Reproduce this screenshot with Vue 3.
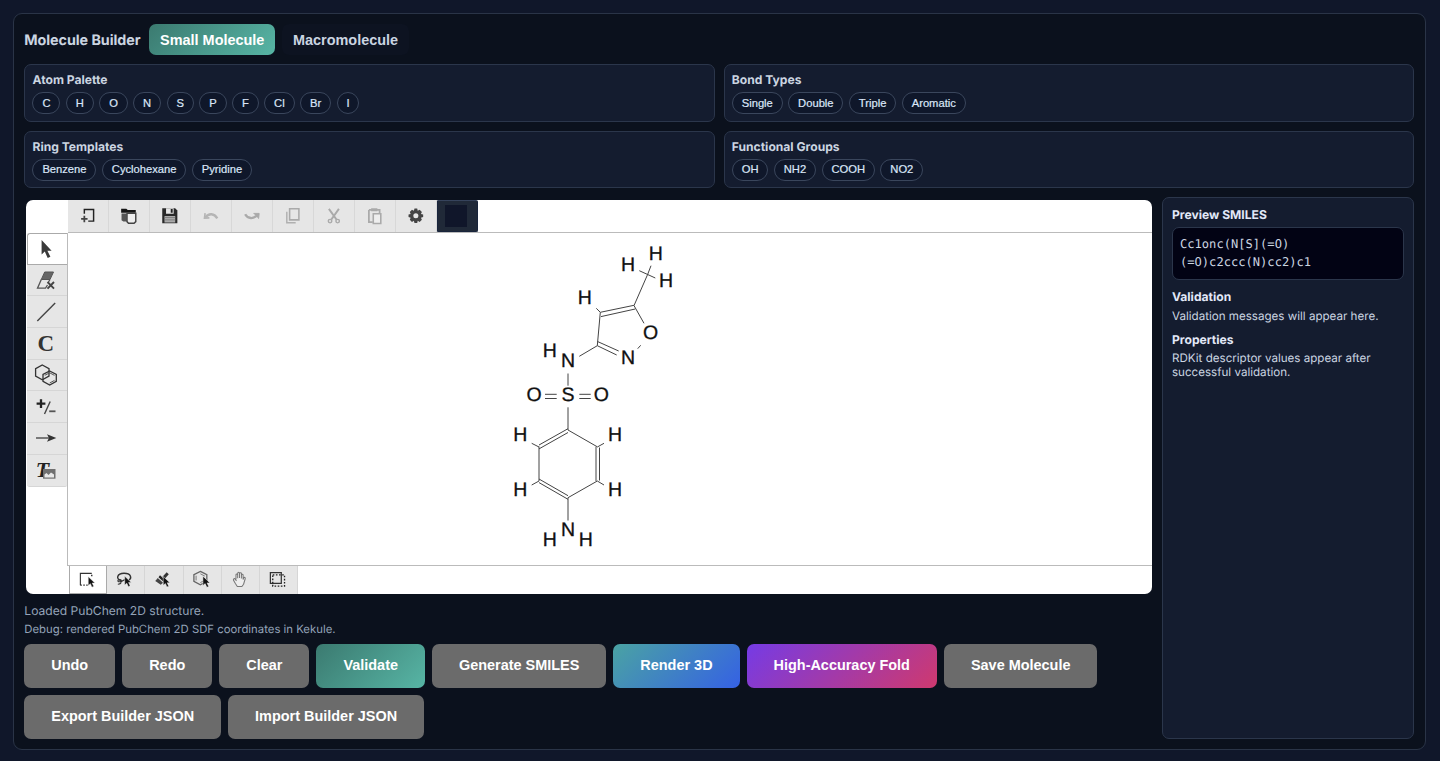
<script setup>
const palettes = [
  { title: 'Atom Palette', items: ['C', 'H', 'O', 'N', 'S', 'P', 'F', 'Cl', 'Br', 'I'] },
  { title: 'Bond Types', items: ['Single', 'Double', 'Triple', 'Aromatic'] },
  { title: 'Ring Templates', items: ['Benzene', 'Cyclohexane', 'Pyridine'] },
  { title: 'Functional Groups', items: ['OH', 'NH2', 'COOH', 'NO2'] },
]

const cursor = '<path d="M0 0V11L2.6 8.7L4.6 13L6.8 12L4.8 7.9H8.2Z" fill="#111" stroke="#eee" stroke-width=".6"/>'

const topTools = [
  { name: 'new', art: '<path d="M6.5 8V3.5H16V15.5H10.5" fill="none" stroke="#222" stroke-width="1.5"/><path d="M6.5 10V16.6M3.2 13.3H9.8" stroke="#444" stroke-width="1.8"/>' },
  { name: 'open', art: '<path d="M2.2 2.8H7.5L9 4H17.2V7H2.2Z" fill="#151515"/><path d="M2.6 7.8H8V16H4.5L2.6 14.5Z" fill="#555"/><path d="M8.2 7.5H17.2V16L15.5 17.6H9.7L8.2 16Z" fill="#eee" stroke="#444" stroke-width="1.5"/>' },
  { name: 'save', art: '<path d="M2.3 2.2H15.5L17.8 4.5V17.8H2.3Z" fill="#292929"/><path d="M6.2 2.2H14V8H6.2Z" fill="#e6e6e6"/><path d="M11 3H13V7H11Z" fill="#222"/><path d="M4.6 10.3H15.6V17H4.6Z" fill="#aaa"/><path d="M4.6 11.8H15.6M4.6 14.2H15.6" stroke="#777" stroke-width=".8"/>' },
  { name: 'undo', art: '<path d="M4.2 7.4L3.6 12.4L8.6 12.2" fill="none" stroke="#b5b5b5" stroke-width="1.7"/><path d="M4.5 11.7C8 7 13.5 7.4 16.7 12.6" fill="none" stroke="#b5b5b5" stroke-width="2.4"/>' },
  { name: 'redo', art: '<path d="M11.8 7.6H17.6L17 13" fill="#aaa" stroke="#aaa" stroke-width="1"/><path d="M3.2 8.5C6 13.5 12 13.5 15.8 9.3" fill="none" stroke="#aaa" stroke-width="2.4"/>' },
  { name: 'copy', art: '<path d="M6.8 2.8H16.3V14.2H6.8Z" fill="none" stroke="#aaa" stroke-width="1.6"/><path d="M3.9 6V17.2H13" fill="none" stroke="#b0b0b0" stroke-width="1.5"/>' },
  { name: 'cut', art: '<path d="M5 3L12.8 13.8M15.3 3L7.5 13.8" stroke="#aaa" stroke-width="2"/><circle cx="6.2" cy="15.5" r="1.8" fill="none" stroke="#aaa" stroke-width="1.5"/><circle cx="14" cy="15.5" r="1.8" fill="none" stroke="#aaa" stroke-width="1.5"/>' },
  { name: 'paste', art: '<path d="M4 4H15V9M4 4V16.5H8" fill="none" stroke="#aaa" stroke-width="1.8"/><path d="M6.3 2.2H12.7V5.3H6.3Z" fill="#aaa"/><path d="M8.5 8H16.2V18H8.5Z" fill="#eee" stroke="#aaa" stroke-width="1.6"/>' },
  { name: 'settings', art: '<path d="M8.7 2.6H11.5L12 4.8L14 3.9L16.3 6.1L15.3 8.2L17.6 8.7V11.4L15.3 12L16.3 14.1L14 16.3L12 15.2L11.5 17.5H8.7L8.1 15.2L6.1 16.3L3.9 14.1L4.8 12L2.6 11.4V8.7L4.8 8.2L3.9 6.1L6.1 3.9L8.1 4.8Z" fill="#444"/><circle cx="10.1" cy="10" r="2.6" fill="#e6e6e6"/>' },
]

const sideTools = [
  { name: 'select', art: '<path d="M4.6 1V15.6L7.8 12.6L10.7 19L13.4 17.8L10.4 11.7H14.6Z" fill="#3a3a3a"/>' },
  { name: 'erase', art: '<path d="M8.7 2H17.5L14 9.5H5.3Z" fill="#666" stroke="#555"/><path d="M5.3 9.5L1.5 18.2H9.5L11.5 15M12.5 12L14 9.5" fill="none" stroke="#555" stroke-width="1.3"/><path d="M11.5 12L18 18.6M18 12L11.5 18.6" stroke="#444" stroke-width="1.9"/>' },
  { name: 'bond', art: '<path d="M1.3 19L19.2 1" stroke="#444" stroke-width="1.4"/>' },
  { name: 'atom', art: '<text x="1.6" y="17.5" font-family="Liberation Serif, serif" font-weight="bold" font-size="23" fill="#333">C</text>' },
  { name: 'ring', art: '<path d="M6.3 0L13 3.7V11L6.3 14.7L-.4 11V3.7Z" fill="none" stroke="#333" stroke-width="1.3"/><path d="M13.7 6L20.3 9.5V16.3L13.7 20L7 16.3V9.5Z" fill="none" stroke="#333" stroke-width="1.3"/><path d="M8.8 10.3L13.7 7.8L18.5 10.4M18.5 15.4L13.7 18" fill="none" stroke="#555"/>' },
  { name: 'charge', art: '<path d="M5 2.2V11M.6 6.6H9.4" stroke="#222" stroke-width="2.3"/><path d="M8.5 17L14.2 4.5" stroke="#444" stroke-width="1.4"/><path d="M13.2 14.3H19.5" stroke="#555" stroke-width="1.8"/>' },
  { name: 'arrow', art: '<path d="M0 10H15" stroke="#555" stroke-width="1.5"/><path d="M11 6.2L20.3 10L11 13.8L13 10Z" fill="#333"/>' },
  { name: 'text', art: '<text x="-.3" y="17" font-family="Liberation Serif, serif" font-weight="bold" font-style="italic" font-size="22" fill="#222">T</text><path d="M7 9H19.5V18.7H7Z" fill="#707070"/><path d="M8.5 17.5V14.5L10.5 13L12.5 15L15 12.5L18 14.5V17.5Z" fill="#e8e8e8"/>' },
]

const bottomTools = [
  { name: 'marquee', art: '<path d="M2.5 16V3.5H14.5" fill="none" stroke="#333" stroke-width="1.2"/><path d="M14.5 5V8M2.5 16H11" stroke="#222" stroke-width="1.4" stroke-dasharray="1.5 1.6"/><g transform="translate(10.8 7) scale(.85)">' + cursor + '</g>' },
  { name: 'lasso', art: '<path d="M6.5 11C.5 10 2 3.5 9.5 3.5C17.5 3.5 17.5 8.8 14.8 10.6" fill="none" stroke="#333" stroke-width="1.5"/><path d="M7 11C3 8.5 1.5 12.5 5 12.4C9 12.2 8.5 9.5 11 10.5M6.5 12.2C6.5 14 5 15 3 15" fill="none" stroke="#333" stroke-width="1.2"/><g transform="translate(10.2 6.5) scale(.85)">' + cursor + '</g>' },
  { name: 'brush', art: '<path d="M10 7.2L14.4 2.4L16.6 4.4L12.2 9.6Z" fill="#333"/><path d="M7.4 5.6L13 10.8L11.4 12.6L5.8 7.6Z" fill="#222"/><path d="M5 8.5L10.6 13.4L8.2 15.6L2.4 11.6Z" fill="#444"/><g transform="translate(10.8 6.8) scale(.85)">' + cursor + '</g>' },
  { name: 'molecule', art: '<path d="M8.8 1.5L15.6 5V12L8.8 15.6L2 12V5Z" fill="none" stroke="#666" stroke-width="1.4"/><path d="M4.3 6V11M8.8 4L13.5 6.4M8.8 13.2L12 11.6" stroke="#777"/><g transform="translate(11.5 6.5) scale(.9)">' + cursor + '</g>' },
  { name: 'pan', art: '<path d="M6.3 10V5.2C6.3 3.8 8.1 3.8 8.1 5.2V8.7V3.5C8.1 2.1 10 2.1 10 3.5V8.5V3.8C10 2.5 12 2.5 12 3.8V9V5.5C12 4.2 13.8 4.2 13.8 5.5V10L14.3 8.4C15 7.2 16.5 7.8 16 9.2L14.3 15L12.5 17.4H7.7L5.5 14L3.6 10.6C3.3 9 4.9 8.6 5.6 9.8L6.8 11.6" fill="#eee" stroke="#777" stroke-width="1.1"/>' },
  { name: 'expand', art: '<path d="M2.5 2.7H14V14H2.5Z" fill="none" stroke="#333" stroke-width="1.3"/><path d="M5 5.2H17.4V17H5Z" fill="none" stroke="#222" stroke-width="1.4" stroke-dasharray="1.7 1.6"/>' },
]

const atoms = [
  ['H', 655.7, 260.4], ['H', 628, 271], ['H', 666, 286.8], ['H', 584.8, 303.5], ['H', 549.7, 357.2],
  ['N', 568, 366.6], ['N', 628, 364.3], ['O', 650.5, 339], ['S', 568, 401.2], ['O', 534, 401.2], ['O', 601.3, 401.2],
  ['H', 520.3, 440.7], ['H', 615, 440.7], ['H', 520.3, 495.5], ['H', 615, 495.5],
  ['N', 568, 536], ['H', 549.8, 545.8], ['H', 585.8, 545.8],
]

const bonds = [
  'M651 265.7L647.7 274.3L634 305.6L644 323.3', 'M639.3 270.7L655.3 278',
  'M634 305.3L600.3 312.3L597.3 345.7L579.3 356.3', 'M635.2 309L601 316.6', 'M596.3 308.3L600.3 312.3',
  'M597.5 341.5L618.7 351', 'M597.3 345.7L616.7 355', 'M640.7 345.3L637.7 348.7',
  'M568 373.5V385.7', 'M545 394.3H556.7M545 398.5H556.7M579.3 394.3H590.7M579.3 398.5H590.7',
  'M568 407.3V430L597.3 446.8', 'M568 428.7L539 445', 'M568 432.5L539 448.9',
  'M539 446.5V481', 'M539 479L568 495.7', 'M539 482.6L568 499.3',
  'M568 520.5V497.7L597.3 481', 'M596 446.7V481M599.5 447.5V480.5',
  'M531.7 443.3L539 447M604 443.3L597.3 447M531.7 485L539 481M604 485L597.3 481',
]

const actions = [
  { label: 'Undo' }, { label: 'Redo' }, { label: 'Clear' },
  { label: 'Validate', tone: 'teal' }, { label: 'Generate SMILES' },
  { label: 'Render 3D', tone: 'blue' }, { label: 'High-Accuracy Fold', tone: 'violet' },
  { label: 'Save Molecule' }, { label: 'Export Builder JSON' }, { label: 'Import Builder JSON' },
]
</script>

<template>
  <div class="page">
    <section class="builder">
      <header class="head">
        <h1>Molecule Builder</h1>
        <button class="tab teal">Small Molecule</button>
        <button class="tab idle">Macromolecule</button>
      </header>

      <div class="palettes">
        <div v-for="p in palettes" :key="p.title" class="card palette">
          <h2>{{ p.title }}</h2>
          <div class="pills">
            <button v-for="i in p.items" :key="i" class="pill">{{ i }}</button>
          </div>
        </div>
      </div>

      <div class="work">
        <div class="left">
          <div class="editor">
            <div class="corner"></div>
            <div class="top-bar">
              <button v-for="t in topTools" :key="t.name" class="tool" :aria-label="t.name">
                <svg viewBox="0 0 20 20" v-html="t.art"></svg>
              </button>
              <button class="tool swatch" aria-label="inspector"><span></span></button>
            </div>
            <div class="side-bar">
              <button v-for="(t, n) in sideTools" :key="t.name" class="tool" :class="{ on: n === 0 }" :aria-label="t.name">
                <svg viewBox="0 0 20 20" v-html="t.art"></svg>
              </button>
            </div>
            <div class="canvas">
              <svg viewBox="68 233 1084 332" width="1084" height="332">
                <path v-for="d in bonds" :key="d" :d="d" class="bond" />
                <text v-for="(a, n) in atoms" :key="n" :x="a[1]" :y="a[2]" class="atom">{{ a[0] }}</text>
              </svg>
            </div>
            <div class="bottom-bar">
              <button v-for="(t, n) in bottomTools" :key="t.name" class="tool" :class="{ on: n === 0 }" :aria-label="t.name">
                <svg viewBox="0 0 20 20" v-html="t.art"></svg>
              </button>
            </div>
          </div>
          <p class="status">Loaded PubChem 2D structure.</p>
          <p class="debug">Debug: rendered PubChem 2D SDF coordinates in Kekule.</p>
          <div class="actions">
            <button v-for="a in actions" :key="a.label" class="action" :class="a.tone">{{ a.label }}</button>
          </div>
        </div>

        <aside class="card preview">
          <h3>Preview SMILES</h3>
          <pre>Cc1onc(N[S](=O)
(=O)c2ccc(N)cc2)c1</pre>
          <h3>Validation</h3>
          <p>Validation messages will appear here.</p>
          <h3>Properties</h3>
          <p>RDKit descriptor values appear after successful validation.</p>
        </aside>
      </div>
    </section>
  </div>
</template>

<style>
body { background: #10172a; }
</style>

<style scoped>
* { box-sizing: border-box; }
.page {
  height: 761px;
  padding: 13px 14.5px 11px 13px;
  background: #10172a;
  font-family: Inter, "Liberation Sans", sans-serif;
  color: #cbd5e1;
  text-rendering: geometricPrecision;
}
.builder {
  height: 737px;
  padding: 10px 10.5px 10px 10.3px;
  border: 1px solid #2a3447;
  border-radius: 9px;
  background: #0b111d;
}
h1, h2, h3, p, pre { margin: 0; }
button { border: 0; padding: 0; font-family: "Liberation Sans", Arial, sans-serif; }
.head { display: flex; align-items: center; height: 31px; }
h1 { width: 125px; padding-top: 2px; font-size: 14.3px; font-weight: 650; letter-spacing: -.05px; color: #cbd5e1; white-space: nowrap; }
.tab {
  height: 31px;
  padding: 0 10.8px;
  border-radius: 7px;
  font-size: 14.45px;
  font-weight: 700;
  color: #fff;
}
.tab.idle { margin-left: 7px; background: #0d1321; color: #cbd5e1; }
.teal { background: linear-gradient(135deg, #3b7a70, #57b5a5); }

.palettes {
  display: grid;
  grid-template-columns: 1fr 1fr;
  gap: 9px;
  margin-top: 9px;
}
.card { border: 1px solid #2b364b; border-radius: 7px; background: #141c2f; }
.palette { height: 57.5px; padding: 7px 7.2px; }
h2 { height: 15px; font-size: 12.1px; line-height: 15px; font-weight: 650; }
.pills { display: flex; gap: 5.5px; margin-top: 5px; }
.pill {
  height: 22px;
  padding: 0 8.9px;
  border: 1px solid #3a465c;
  border-radius: 11px;
  background: #0f172a;
  color: #dbe6f8;
  font-size: 11.2px;
  line-height: 19px;
  -webkit-text-stroke: .2px;
}

.work {
  display: grid;
  grid-template-columns: 1fr 252px;
  gap: 9px;
  height: 541px;
  margin-top: 9px;
}
.left { padding-top: 3px; }
.editor {
  display: grid;
  grid-template-columns: 42px 1fr;
  grid-template-rows: 33px 333px 28px;
  width: 1126px;
  height: 394px;
  margin-left: 1.7px;
  overflow: hidden;
  border-radius: 7px;
  background: #fff;
}
.tool {
  display: flex;
  align-items: center;
  justify-content: center;
  flex: none;
  background: #e6e6e6;
}
.tool svg { display: block; width: 20px; height: 20px; overflow: visible; }
.top-bar { display: flex; border-bottom: 1px solid #bbb; }
.top-bar .tool { width: 41px; height: 32px; border-right: 1px solid #d8d8d8; }
.top-bar .tool svg { width: 19.5px; height: 19.5px; margin-right: 1px; }
.top-bar .swatch { border: 1px solid #18243c; border-top-color: #36435c; border-radius: 1px 2px 2px 1px; background: #202938; }
.swatch span { width: 22px; height: 22px; margin-right: 2px; background: #10162a; }
.side-bar { display: flex; flex-direction: column; padding-left: 1px; border-right: 1px solid #bbb; }
.side-bar .tool { height: 31.7px; border-bottom: 1px solid #d6d6d6; }
.side-bar .tool:last-child { border-radius: 0 0 2px 3px; }
.tool.on { background: #fff; }
.side-bar .on { border: 1px solid #aaa; border-right: 0; border-radius: 3px 0 0 0; }
.side-bar .tool svg { margin-right: 1.4px; }
.canvas { border-bottom: 1px solid #bbb; }
.canvas svg { display: block; }
.bond { fill: none; stroke: #444; stroke-width: 1; }
.atom { font: 19.5px "Liberation Sans", Arial, sans-serif; fill: #111; stroke: #111; stroke-width: .3; text-anchor: middle; }
.bottom-bar { display: flex; grid-column: 2; padding-left: 1px; }
.bottom-bar .tool { width: 38.2px; height: 27.5px; border-right: 1px solid #d6d6d6; }
.bottom-bar .on { border: 1px solid #aaa; border-top: 0; }
.bottom-bar .tool svg { width: 19px; height: 19px; margin-right: 2px; }

.status, .debug { color: #94a3b8; white-space: nowrap; }
.status { height: 18px; margin-top: 8px; font-size: 12.1px; line-height: 18px; }
.debug { height: 17px; font-size: 11.35px; line-height: 18px; }
.actions { display: flex; flex-wrap: wrap; gap: 7px; margin-top: 6.5px; }
.action {
  height: 44px;
  padding: 0 27px 1px;
  border-radius: 7px;
  background: #6b6b6b;
  color: #fff;
  font-size: 14.45px;
  font-weight: 700;
}
.action.teal { background: linear-gradient(135deg, #3b7a70, #57b5a5); }
.action.blue { background: linear-gradient(135deg, #4aa3a3, #3561e4); }
.action.violet { background: linear-gradient(135deg, #753be5, #cf396e); }

.preview { padding: 8px 9px; font-size: 11.6px; line-height: 14px; }
.preview h3 { height: 18px; font-size: 12.1px; line-height: 17.5px; font-weight: 650; color: #e2e8f8; }
.preview pre {
  height: 53px;
  margin: 3px 0 8px;
  padding: 7px;
  border: 1px solid #2b364b;
  border-radius: 7px;
  background: #020314;
  font: 12.1px/18.3px "DejaVu Sans Mono", monospace;
}
.preview p { margin: 2.5px 0 8px; }
</style>
